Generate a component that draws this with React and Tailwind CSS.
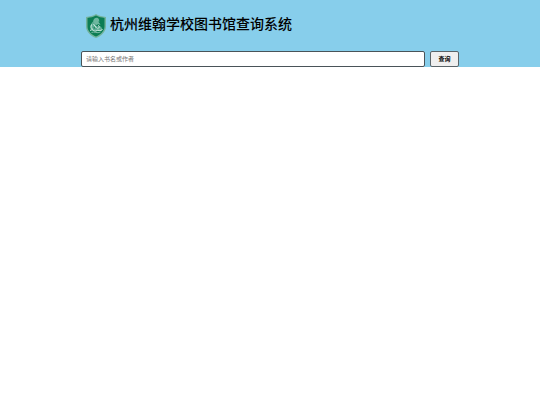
import React, { useState } from 'react';

function SchoolBadge() {
  return (
    <svg className="w-5 h-6 shrink-0" viewBox="0 0 40 48" preserveAspectRatio="none" aria-hidden="true">
      <path d="M20 0 C14 4 8 5 0 6 V25 C0 36 10 44 20 48 C30 44 40 36 40 25 V6 C32 5 26 4 20 0 Z" fill="#73b39c" />
      <path d="M20 3 C14 6 9 7 3 8 V25 C3 34 11 41 20 45 C29 41 37 34 37 25 V8 C31 7 26 6 20 3 Z" fill="#0c7d54" />
      <path d="M17 9 C20 6 25 7 26 11 C27 15 26 18 29 22 L24 20 C22 23 18 22 16 19 C13 17 14 12 17 9 Z" fill="#6fb8a0" />
      <path d="M15 14 C10 18 8 24 9 30 L15 34 H29 L33 31 C30 24 27 23 24 25 L18 22 Z" fill="#5fae95" />
      <path d="M11 21 C9 26 10 29 14 31 M15 20 L21 28 M24 22 C28 25 27 28 23 29 M8 33 C14 29 16 36 20 34 C25 30 28 36 33 31" fill="none" stroke="#d0ebe4" strokeWidth="2" />
      <path d="M16 25 L19 29 L15 29 Z M25 14 L29 17 L26 18 Z" fill="#0c7d54" />
      <path d="M11 37 C17 34 22 40 29 36" fill="none" stroke="#79b9a5" strokeWidth="2" />
    </svg>
  );
}

export default function App() {
  const [keyword, setKeyword] = useState('');

  const handleSubmit = (e) => {
    e.preventDefault();
  };

  return (
    <div className="min-h-screen bg-white font-['Liberation_Sans','Noto_Sans_CJK_SC',sans-serif]" lang="zh-CN">
      <header className="bg-[#87ceeb]">
        <div className="w-[70%] mx-auto">
          <div className="flex items-start gap-1 pt-3.5 pb-3 pl-[5px]">
            <SchoolBadge />
            <h1 className="text-[14px] leading-5 font-medium text-black whitespace-nowrap">杭州维翰学校图书馆查询系统</h1>
          </div>

          <form onSubmit={handleSubmit} className="flex gap-[5px] pt-px">
            <input
              type="text"
              value={keyword}
              onChange={(e) => setKeyword(e.target.value)}
              placeholder="请输入书名或作者"
              aria-label="请输入书名或作者"
              className="flex-1 min-w-0 h-4 px-1 bg-white border border-[#4a5459] rounded-xs text-[6px] leading-3 text-black placeholder:text-[#757575]"
            />
            <button
              type="submit"
              className="w-[29px] h-4 bg-[#efefef] border border-[#5a6469] rounded-xs text-[6px] leading-3 font-bold text-black"
            >
              查询
            </button>
          </form>
        </div>
      </header>
    </div>
  );
}
